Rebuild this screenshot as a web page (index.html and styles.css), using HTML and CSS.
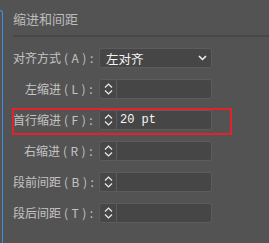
FILE: index.html
```html
<!DOCTYPE html>
<html lang="zh">
<head>
<meta charset="utf-8">
<link rel="stylesheet" href="styles.css">
</head>
<body>
<div class="edge"></div>
<div class="panel">
  <div class="title">缩进和间距</div>
  <div class="rows">
    <div class="row">
      <span class="label">对齐方式<span class="k">(A):</span></span>
      <div class="select"><span>左对齐</span>
        <svg width="9" height="6" viewBox="0 0 9 6"><path d="M1 1 L4.5 4.5 L8 1" fill="none" stroke="#f2f2f2" stroke-width="1.5"/></svg>
      </div>
    </div>
    <div class="row">
      <span class="label">左缩进<span class="k">(L):</span></span>
      <div class="spin"><svg width="9" height="16" viewBox="0 0 9 16"><path d="M1 6.5 L4.5 3 L8 6.5 M1 9.5 L4.5 13 L8 9.5" fill="none" stroke="#ececec" stroke-width="1.2"/></svg></div>
      <div class="input"></div>
    </div>
    <div class="row hl">
      <span class="label">首行缩进<span class="k">(F):</span></span>
      <div class="spin"><svg width="9" height="16" viewBox="0 0 9 16"><path d="M1 6.5 L4.5 3 L8 6.5 M1 9.5 L4.5 13 L8 9.5" fill="none" stroke="#ececec" stroke-width="1.2"/></svg></div>
      <div class="input"><span class="val">20 pt</span></div>
    </div>
    <div class="row">
      <span class="label">右缩进<span class="k">(R):</span></span>
      <div class="spin"><svg width="9" height="16" viewBox="0 0 9 16"><path d="M1 6.5 L4.5 3 L8 6.5 M1 9.5 L4.5 13 L8 9.5" fill="none" stroke="#ececec" stroke-width="1.2"/></svg></div>
      <div class="input"></div>
    </div>
    <div class="row">
      <span class="label">段前间距<span class="k">(B):</span></span>
      <div class="spin"><svg width="9" height="16" viewBox="0 0 9 16"><path d="M1 6.5 L4.5 3 L8 6.5 M1 9.5 L4.5 13 L8 9.5" fill="none" stroke="#ececec" stroke-width="1.2"/></svg></div>
      <div class="input"></div>
    </div>
    <div class="row">
      <span class="label">段后间距<span class="k">(T):</span></span>
      <div class="spin"><svg width="9" height="16" viewBox="0 0 9 16"><path d="M1 6.5 L4.5 3 L8 6.5 M1 9.5 L4.5 13 L8 9.5" fill="none" stroke="#ececec" stroke-width="1.2"/></svg></div>
      <div class="input"></div>
    </div>
  </div>
</div>
</body>
</html>
```
FILE: styles.css
```css
html, body {
  margin: 0;
  padding: 0;
  background: #535353;
  height: 243px;
  overflow: hidden;
}
body {
  display: flex;
  font-family: "Noto Sans CJK SC", "Noto Sans", sans-serif;
  color: #c4c4c4;
}
.edge {
  width: 2px;
  margin-top: 10px;
  border-top: 1px solid #3d8ee6;
  border-right: 1px solid #3d8ee6;
  border-top-right-radius: 3px;
}
.panel {
  flex: 1;
  padding-left: 10px;
}
.title {
  font-size: 13px;
  line-height: 17px;
  padding-top: 10px;
  padding-bottom: 8px;
  border-bottom: 2px solid #474747;
  color: #bdbdbd;
}
.rows {
  display: flex;
  flex-direction: column;
  gap: 11px;
  margin-top: 11px;
}
.row {
  position: relative;
  display: flex;
  align-items: center;
  height: 20px;
}
.label {
  width: 83px;
  padding-right: 3px;
  text-align: right;
  font-size: 12px;
  line-height: 20px;
  white-space: nowrap;
}
.k {
  letter-spacing: 3.5px;
  padding-left: 3px;
}
.select {
  box-sizing: border-box;
  width: 113px;
  height: 20px;
  display: flex;
  align-items: center;
  justify-content: space-between;
  padding: 0 4px 0 6px;
  background: #464646;
  border: 1px solid #5c5c5c;
  border-radius: 3px;
  color: #f4f4f4;
  font-size: 12.5px;
}
.spin {
  box-sizing: border-box;
  width: 18px;
  height: 20px;
  display: flex;
  align-items: center;
  justify-content: center;
  background: #474747;
  border: 1px solid #5c5c5c;
  border-radius: 3px 0 0 3px;
}
.input {
  box-sizing: border-box;
  width: 95px;
  height: 20px;
  background: #464646;
  border: 1px solid #5c5c5c;
  border-left: none;
  border-radius: 0 3px 3px 0;
  display: flex;
  align-items: center;
  padding-left: 3px;
}
.val {
  font-family: "Liberation Mono", monospace;
  font-size: 12px;
  color: #f6f6f6;
}
.hl::after {
  content: "";
  position: absolute;
  left: -1px;
  top: -2px;
  width: 216px;
  height: 23px;
  border: 2px solid #e3232b;
}
```
